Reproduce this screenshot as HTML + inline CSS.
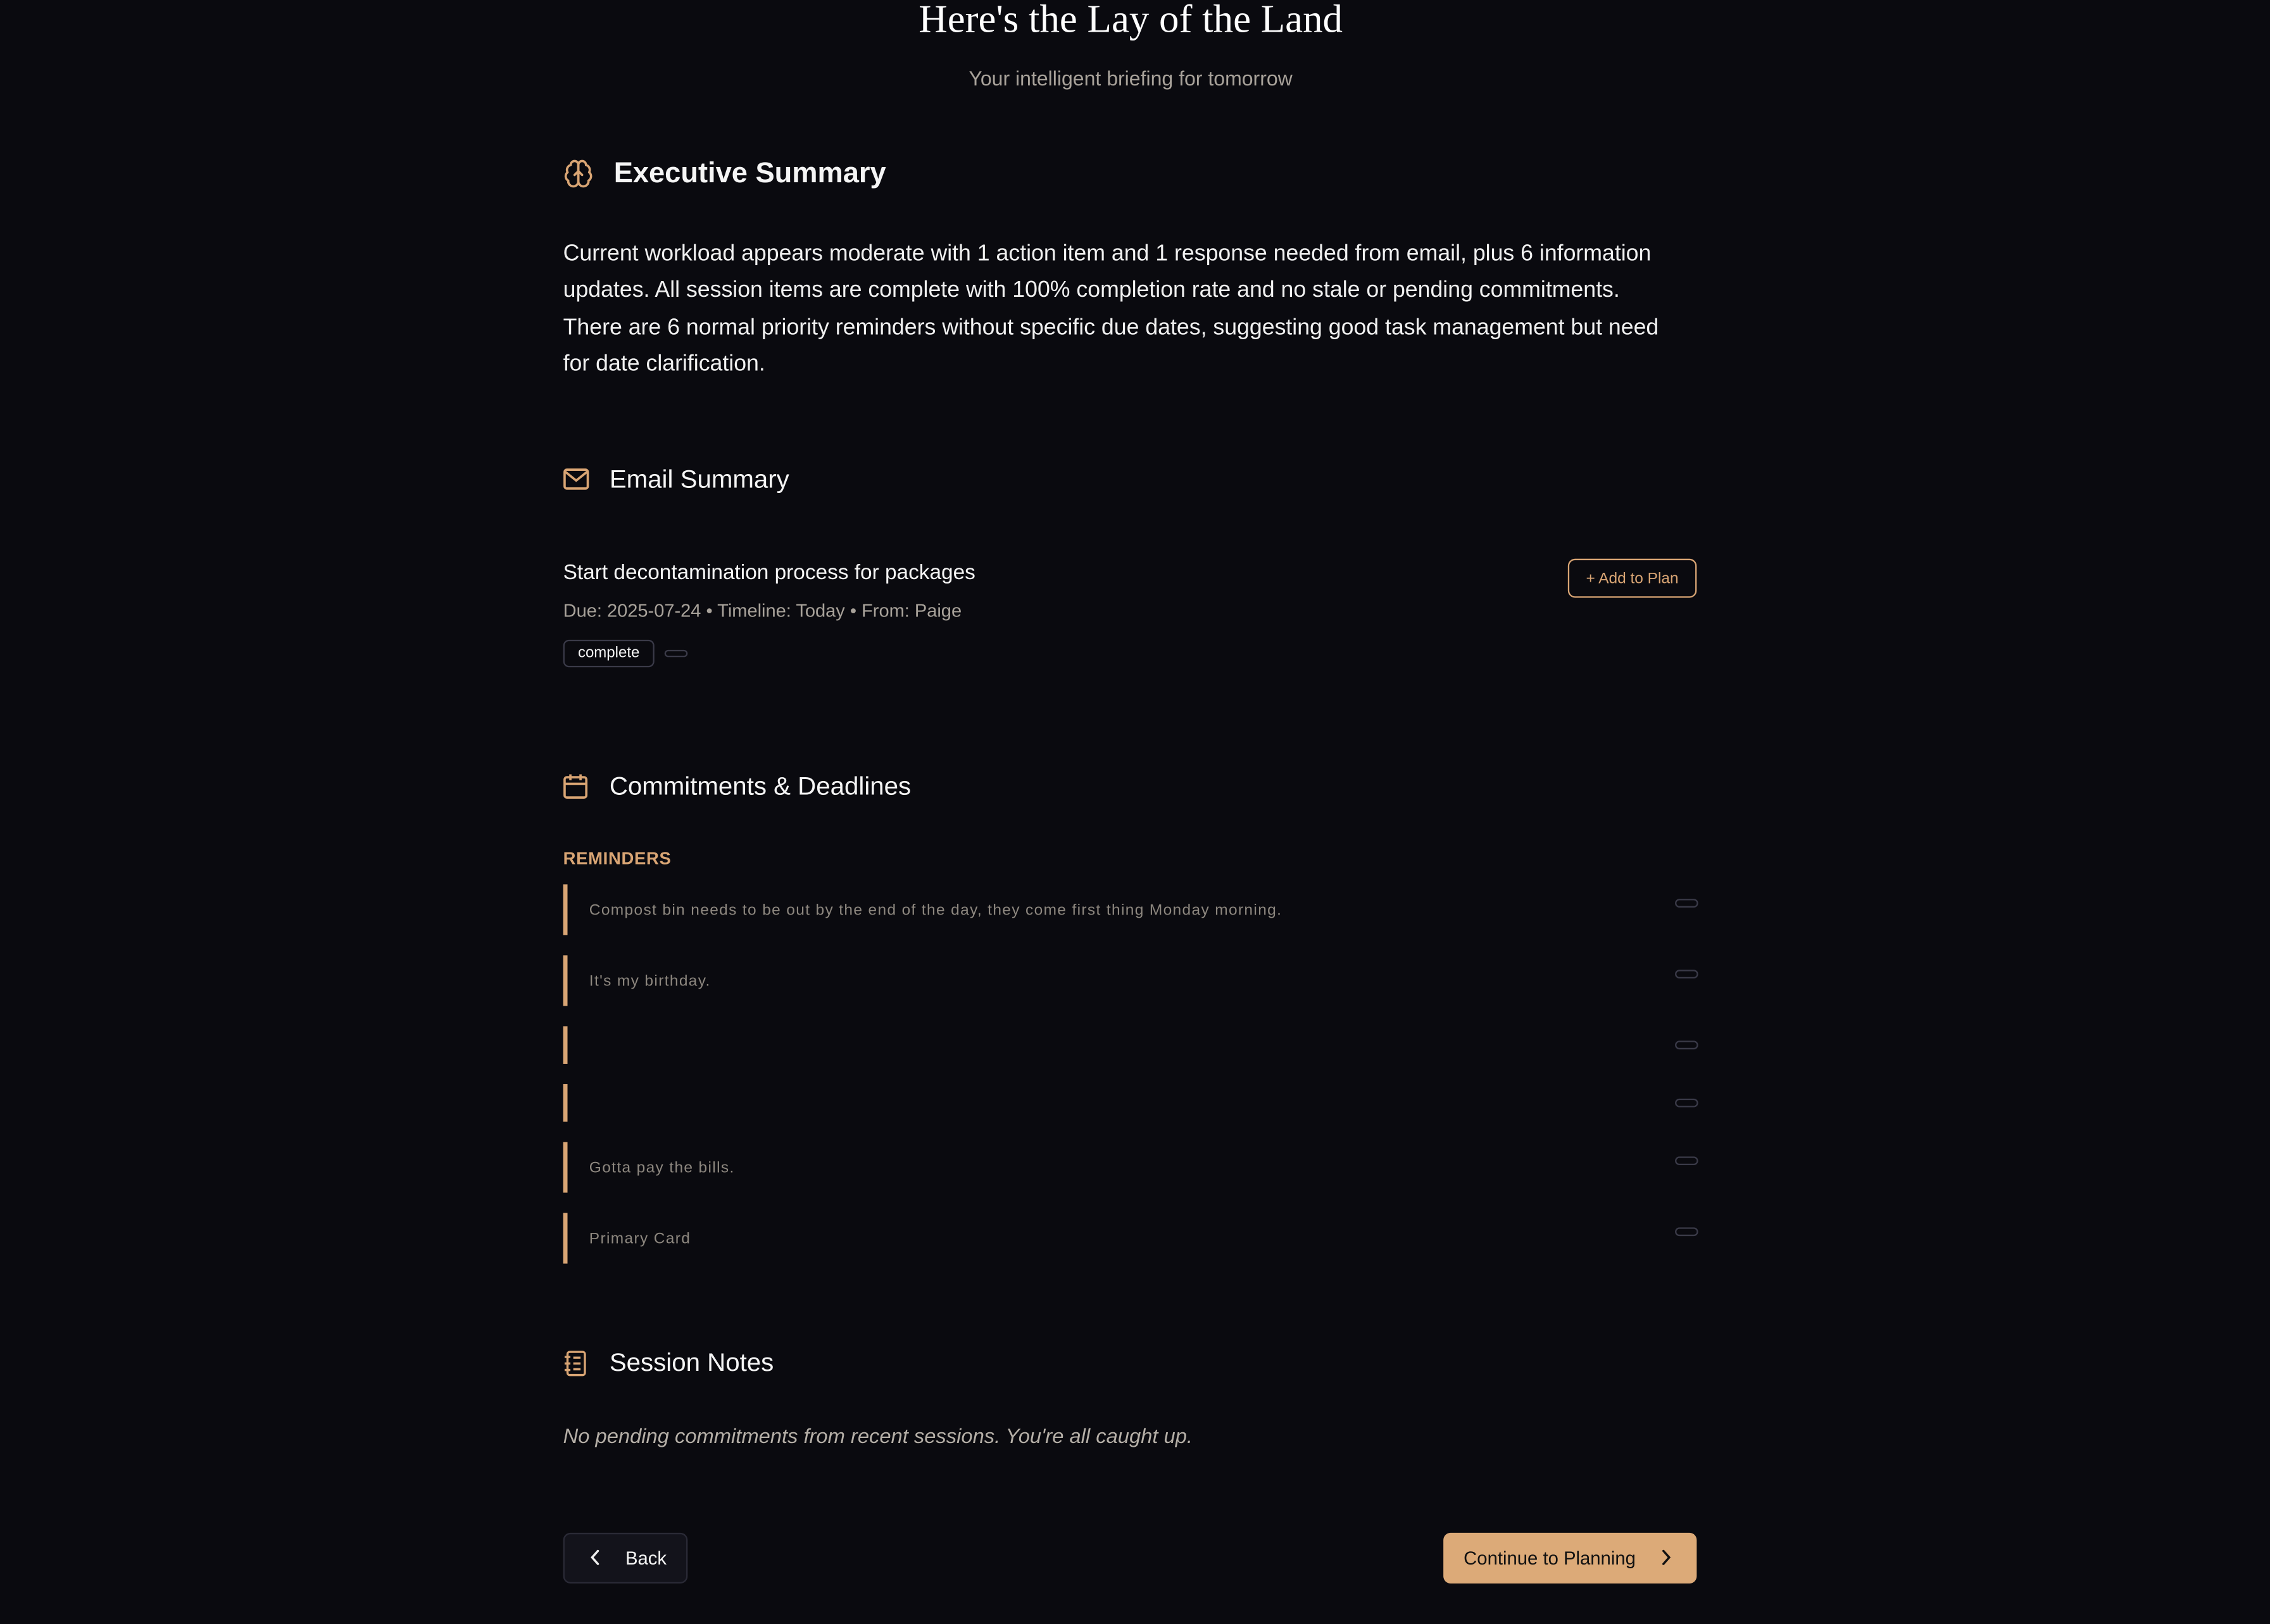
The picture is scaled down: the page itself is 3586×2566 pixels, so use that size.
<!DOCTYPE html>
<html><head><meta charset="utf-8"><style>
html,body{margin:0;padding:0;background:#0a0a0f;}
body{width:3586px;height:2566px;overflow:hidden;}
#w{position:absolute;left:0;top:0;width:1568px;height:1122px;transform:scale(2.2870);transform-origin:0 0;font-family:"Liberation Sans",sans-serif;color:#f2f2f2;}
.a{position:absolute;white-space:nowrap;}
.h{font-size:17.6px;color:#f5f5f5;}
.bar{position:absolute;left:389px;width:3px;background:#d9a574;}
.rt{position:absolute;left:407px;font-size:10.7px;color:#8d877f;letter-spacing:.6px;}
.pill{position:absolute;left:1157px;width:14px;height:4px;border:1px solid #3a3a48;border-radius:3px;}
svg{position:absolute;}
</style></head><body><div id="w">
<div class="a" style="left:0;width:1562px;text-align:center;top:-3px;font-family:'Liberation Serif',serif;font-size:27.5px;color:#fff;">Here's the Lay of the Land</div>
<div class="a" style="left:0;width:1562px;text-align:center;top:46px;font-size:14px;color:#a8a29a;">Your intelligent briefing for tomorrow</div>

<svg style="left:389px;top:109px" width="21" height="22" viewBox="0 0 24 24" fill="none" stroke="#d9a574" stroke-width="1.8" stroke-linecap="round" stroke-linejoin="round"><path d="M12 5a3 3 0 1 0-5.997.125 4 4 0 0 0-2.526 5.77 4 4 0 0 0 .556 6.588A4 4 0 1 0 12 18Z"/><path d="M12 5a3 3 0 1 1 5.997.125 4 4 0 0 1 2.526 5.77 4 4 0 0 1-.556 6.588A4 4 0 1 1 12 18Z"/><path d="M12 5v13M9 13l3-3 3 3"/></svg>
<div class="a" style="left:424px;top:109px;font-size:19.8px;font-weight:bold;color:#f5f5f5;">Executive Summary</div>
<div class="a" style="left:389px;top:163px;width:768px;white-space:normal;font-size:15.6px;line-height:25.4px;color:#f0f0f0;">Current workload appears moderate with 1 action item and 1 response needed from email, plus 6 information updates. All session items are complete with 100% completion rate and no stale or pending commitments. There are 6 normal priority reminders without specific due dates, suggesting good task management but need for date clarification.</div>

<svg style="left:389px;top:323px" width="18" height="16" viewBox="0 0 18 16" fill="none" stroke="#d9a574" stroke-width="1.6"><rect x="1" y="1.5" width="16" height="13" rx="1.5"/><path d="M1.5 3l7.5 6 7.5-6"/></svg>
<div class="a h" style="left:421px;top:321px;">Email Summary</div>
<div class="a" style="left:389px;top:388px;font-size:14.6px;color:#f5f5f5;">Start decontamination process for packages</div>
<div class="a" style="left:389px;top:415px;font-size:12.7px;color:#a8a29a;">Due: 2025-07-24 • Timeline: Today • From: Paige</div>
<div class="a" style="left:389px;top:442px;width:61px;height:17px;border:1px solid #3a3a48;border-radius:4px;font-size:10.5px;line-height:17px;text-align:center;color:#f5f5f5;">complete</div>
<div class="a" style="left:459px;top:449px;width:14px;height:3px;border:1px solid #3a3a48;border-radius:3px;"></div>
<div class="a" style="left:1083px;top:386px;width:87px;height:25px;border:1px solid #d9a574;border-radius:5px;font-size:10.7px;line-height:26px;text-align:center;color:#d9a574;">+ Add to Plan</div>

<svg style="left:389px;top:534px" width="17" height="18" viewBox="0 0 17 18" fill="none" stroke="#d9a574" stroke-width="1.6"><rect x="1" y="3" width="15" height="14" rx="1.5"/><path d="M1 7.5h15M5 1v4M12 1v4"/></svg>
<div class="a h" style="left:421px;top:533px;">Commitments &amp; Deadlines</div>
<div class="a" style="left:389px;top:586px;font-size:12px;font-weight:bold;color:#d9a574;letter-spacing:.3px;">REMINDERS</div>

<div class="bar" style="top:611px;height:35px"></div><div class="rt" style="top:623px">Compost bin needs to be out by the end of the day, they come first thing Monday morning.</div><div class="pill" style="top:621px"></div>
<div class="bar" style="top:660px;height:35px"></div><div class="rt" style="top:672px">It's my birthday.</div><div class="pill" style="top:670px"></div>
<div class="bar" style="top:709px;height:26px"></div><div class="pill" style="top:719px"></div>
<div class="bar" style="top:749px;height:26px"></div><div class="pill" style="top:759px"></div>
<div class="bar" style="top:789px;height:35px"></div><div class="rt" style="top:801px">Gotta pay the bills.</div><div class="pill" style="top:799px"></div>
<div class="bar" style="top:838px;height:35px"></div><div class="rt" style="top:850px">Primary Card</div><div class="pill" style="top:848px"></div>

<svg style="left:389px;top:933px" width="16" height="18" viewBox="0 0 16 18" fill="none" stroke="#d9a574" stroke-width="1.5"><rect x="3" y="1" width="12" height="16" rx="1.5"/><path d="M1 4.5h4M1 9h4M1 13.5h4M7 5h5M7 9h5M7 13h5"/></svg>
<div class="a h" style="left:421px;top:931px;">Session Notes</div>
<div class="a" style="left:389px;top:985px;font-size:14.3px;font-style:italic;color:#b5afa7;">No pending commitments from recent sessions. You're all caught up.</div>

<div class="a" style="left:389px;top:1059px;width:84px;height:33px;border:1px solid #2a2a36;border-radius:5px;background:#13131b;"></div>
<svg style="left:406px;top:1070px" width="10" height="12" viewBox="0 0 10 12" fill="none" stroke="#f0f0f0" stroke-width="1.5" stroke-linecap="round"><path d="M7 1.5L3 6l4 4.5"/></svg>
<div class="a" style="left:432px;top:1069px;font-size:12.8px;color:#f5f5f5;">Back</div>
<div class="a" style="left:997px;top:1059px;width:175px;height:35px;border-radius:5px;background:#dcaa78;"></div>
<div class="a" style="left:1011px;top:1069px;font-size:12.8px;color:#111;">Continue to Planning</div>
<svg style="left:1146px;top:1070px" width="10" height="12" viewBox="0 0 10 12" fill="none" stroke="#111" stroke-width="1.5" stroke-linecap="round"><path d="M3 1.5L7 6l-4 4.5"/></svg>
</div></body></html>
